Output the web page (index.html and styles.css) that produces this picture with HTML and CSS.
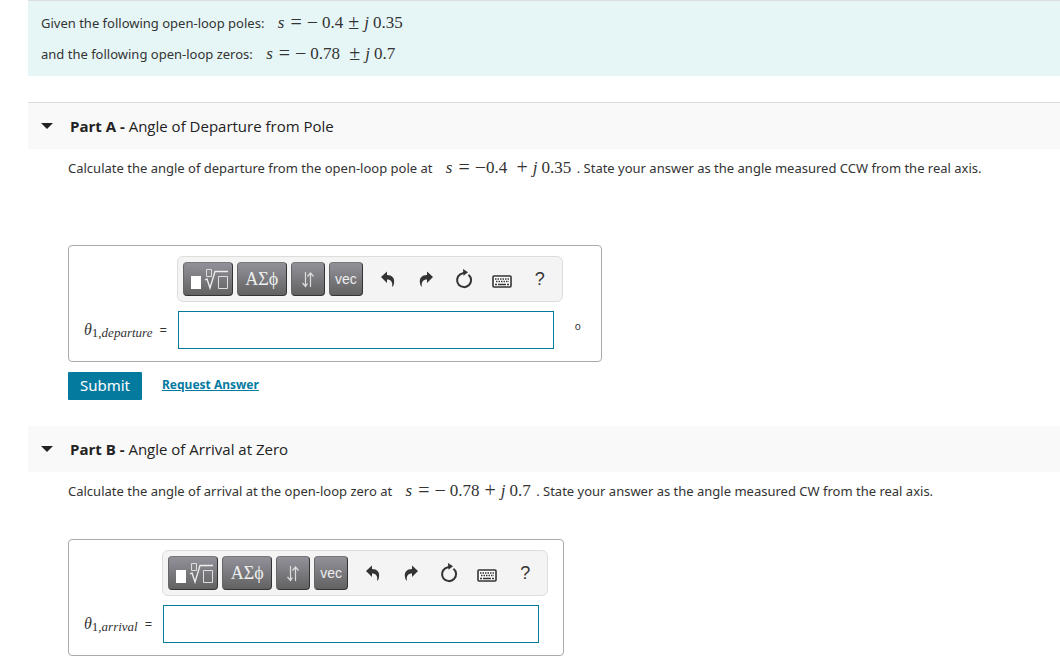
FILE: index.html
```html
<!doctype html>
<html lang="en">
<head>
  <meta charset="utf-8">
  <title>Angles of departure and arrival</title>
  <link rel="stylesheet" href="styles.css">
</head>

<body>
  <!-- icons shared by both equation toolbars -->
  <svg class="symbols" width="0" height="0" aria-hidden="true">
    <symbol id="icon-root" viewBox="-2 0 40 24">
      <path d="M1 9h10v13h-10z" fill="#fff"/>
      <path d="M16.500 2.500h5v7h-5zM28.500 9.500h9v12h-9z" fill="none" stroke="#ddd"/>
      <path d="M15 13l2-1l3 9l5-16.500h13" fill="none" stroke="#eee" stroke-width="1.300"/>
    </symbol>
    <symbol id="icon-arrows" viewBox="0 0 14 18">
      <path d="M4.500 2v14M1.500 13l3 3.500l2-3M9.500 17v-14M6.500 6.500l3-3.500l3 3.500" fill="none" stroke="#ddd" stroke-width="1.200"/>
    </symbol>
    <symbol id="icon-undo" viewBox="0 0 16 16">
      <path d="M1 6l6-5.500v3.500c5 0 8 3 7 8c0 2-1 3-2 4c1-5-1-7.500-5-7.500v3.500z" fill="#333"/>
    </symbol>
    <symbol id="icon-redo" viewBox="0 0 16 16">
      <path d="M15 6l-6-5.500v3.500c-5 0-8 3-7 8c0 2 1 3 2 4c-1-5 1-7.500 5-7.500v3.500z" fill="#333"/>
    </symbol>
    <symbol id="icon-reset" viewBox="0 0 18 20">
      <path d="M13.500 5.700a7 7 0 1 1-8.300-.4l4.800-2" fill="none" stroke="#333" stroke-width="2"/>
      <path d="M8 0l5 3.200l-4.500 3.600z" fill="#333"/>
    </symbol>
    <symbol id="icon-keyboard" viewBox="0 0 20 13">
      <rect x="1" y="1" width="18" height="11" rx="1" fill="#fff" stroke="#333" stroke-width="1.600"/>
      <path d="M3 4h14M4 6.500h13" stroke="#333" stroke-width="1.500" stroke-dasharray="1.500 1"/>
      <path d="M3 9.500h2M6 9.500h8M15 9.500h2" stroke="#333" stroke-width="1.500"/>
    </symbol>
  </svg>

  <main>
    <section class="intro">
      <p>Given the following open-loop poles: <span class="math"><i class="var">s</i><span class="rel">=</span><span class="neg">−</span>0.4<span class="bin">±</span><i class="imag">j</i>0.35</span></p>
      <p>and the following open-loop zeros: <span class="math"><i class="var">s</i><span class="rel">=</span><span class="neg">−</span>0.78 <span class="bin">±</span><i class="imag">j</i>0.7</span></p>
    </section>

    <section class="part part-a">
      <h2><button type="button" class="toggle" aria-label="Collapse Part A"></button><span><b>Part A -</b> Angle of Departure from Pole</span></h2>
      <div class="content">
        <p>Calculate the angle of departure from the open-loop pole at <span class="math"><i class="var">s</i><span class="rel">=</span><span class="sign">−</span>0.4 <span class="bin">+</span><i class="imag">j</i>0.35</span> . State your answer as the angle measured CCW from the real axis.</p>
        <div class="answer">
          <div class="toolbar">
            <button type="button" class="key wide" aria-label="Templates"><svg width="40" height="24"><use href="#icon-root"/></svg></button>
            <button type="button" class="key wide greek">ΑΣϕ</button>
            <button type="button" class="key" aria-label="Arrows"><svg width="14" height="18"><use href="#icon-arrows"/></svg></button>
            <button type="button" class="key">vec</button>
            <button type="button" class="tool" aria-label="Undo"><svg width="16" height="16"><use href="#icon-undo"/></svg></button>
            <button type="button" class="tool" aria-label="Redo"><svg width="16" height="16"><use href="#icon-redo"/></svg></button>
            <button type="button" class="tool" aria-label="Reset"><svg width="18" height="20"><use href="#icon-reset"/></svg></button>
            <button type="button" class="tool keyboard" aria-label="Keyboard shortcuts"><svg width="20" height="13"><use href="#icon-keyboard"/></svg></button>
            <button type="button" class="tool">?</button>
          </div>
          <label for="departure"><i>θ</i><sub>1,<i>departure</i></sub> <span class="equals">=</span></label>
          <input type="text" id="departure" name="departure">
          <span class="unit">o</span>
        </div>
        <div class="actions">
          <button type="button" class="submit">Submit</button>
          <a href="#answer">Request Answer</a>
        </div>
      </div>
    </section>

    <section class="part part-b">
      <h2><button type="button" class="toggle" aria-label="Collapse Part B"></button><span><b>Part B -</b> Angle of Arrival at Zero</span></h2>
      <div class="content">
        <p>Calculate the angle of arrival at the open-loop zero at <span class="math"><i class="var">s</i><span class="rel">=</span><span class="neg">−</span>0.78<span class="bin">+</span><i class="imag">j</i>0.7</span> . State your answer as the angle measured CW from the real axis.</p>
        <div class="answer">
          <div class="toolbar">
            <button type="button" class="key wide" aria-label="Templates"><svg width="40" height="24"><use href="#icon-root"/></svg></button>
            <button type="button" class="key wide greek">ΑΣϕ</button>
            <button type="button" class="key" aria-label="Arrows"><svg width="14" height="18"><use href="#icon-arrows"/></svg></button>
            <button type="button" class="key">vec</button>
            <button type="button" class="tool" aria-label="Undo"><svg width="16" height="16"><use href="#icon-undo"/></svg></button>
            <button type="button" class="tool" aria-label="Redo"><svg width="16" height="16"><use href="#icon-redo"/></svg></button>
            <button type="button" class="tool" aria-label="Reset"><svg width="18" height="20"><use href="#icon-reset"/></svg></button>
            <button type="button" class="tool keyboard" aria-label="Keyboard shortcuts"><svg width="20" height="13"><use href="#icon-keyboard"/></svg></button>
            <button type="button" class="tool">?</button>
          </div>
          <label for="arrival"><i>θ</i><sub>1,<i>arrival</i></sub> <span class="equals">=</span></label>
          <input type="text" id="arrival" name="arrival">
        </div>
      </div>
    </section>
  </main>
</body>
</html>
```
FILE: styles.css
```css
* {
  box-sizing: border-box;
}
body {
  margin: 0;
  background: #fff;
  color: #333;
  font-family: "Noto Sans", "Open Sans", sans-serif;
  font-size: 13px;
  line-height: 21px;
}
p, h2 {
  margin: 0;
}
.symbols {
  display: none;
}
main {
  margin-left: 28px;
}
.intro {
  padding: 12px 13px 11px;
  border-top: 1px solid #ddd;
  background: #e6f6f7;
}
.intro p + p {
  margin-top: 10px;
}

.math {
  margin: 0 2px 0 10px;
  font-family: "Liberation Serif", serif;
  font-size: 17px;
  line-height: 16px;
  white-space: nowrap;
}
.var {
  margin-right: 1px;
}
.rel, .neg, .sign, .bin {
  font-size: 20px;
  line-height: 0;
  vertical-align: -1px;
}
.rel, .bin {
  margin: 0 5px;
}
.neg {
  margin-right: 4px;
}
.imag {
  margin-right: 4px;
}

.part-a {
  margin-top: 26px;
  border-top: 1px solid #ddd;
}
.part-b {
  margin-top: 26px;
}
h2 {
  display: flex;
  align-items: center;
  gap: 17px;
  height: 46px;
  padding: 0 13px;
  background: #f9f9f9;
  color: #222;
  font-family: "Open Sans", "Noto Sans", sans-serif;
  font-size: 15px;
  font-weight: 400;
}
.toggle {
  width: 12px;
  height: 6px;
  padding: 0;
  border: 0;
  background: #222;
  clip-path: polygon(0 0, 100% 0, 50% 100%);
}
.content {
  padding: 9px 0 0 40px;
}

.answer {
  display: grid;
  grid-template-columns: auto auto auto;
  align-items: center;
  row-gap: 9px;
  width: fit-content;
  padding: 10px 15px 12px;
  border: 1px solid #aaa;
  border-radius: 4px;
}
.part-a .answer {
  margin-top: 66px;
}
.part-b .answer {
  margin-top: 37px;
}
.toolbar {
  grid-column: 2;
  display: flex;
  align-items: center;
  gap: 4px;
  width: 386px;
  height: 46px;
  padding: 0 5px;
  border: 1px solid #ddd;
  border-radius: 6px;
  background: #f4f4f4;
}
.key {
  display: flex;
  align-items: center;
  justify-content: center;
  width: 34px;
  height: 34px;
  padding: 0;
  border: 1px solid #333;
  border-top-color: #777;
  border-left-color: #666;
  border-radius: 4px;
  background: linear-gradient(#92919a, #626262);
  color: #eee;
  font: 14px "Liberation Sans", sans-serif;
}
.wide {
  width: 50px;
}
.greek {
  font: 18px "Liberation Serif", serif;
}
.tool {
  display: flex;
  align-items: center;
  justify-content: center;
  width: 34px;
  height: 34px;
  padding: 0;
  border: 0;
  background: none;
  color: #333;
  font: 18px "Liberation Sans", sans-serif;
}
.key + .tool {
  margin-left: 4px;
}
.keyboard {
  padding-top: 4px;
}
label {
  grid-column: 1;
  padding-right: 10px;
  font-family: "Liberation Serif", serif;
  font-size: 16px;
  white-space: nowrap;
}
sub {
  font-size: 13px;
  line-height: 0;
  vertical-align: -2px;
}
.equals {
  margin-left: 3px;
  font-family: "Noto Sans", sans-serif;
  font-size: 13px;
}
input {
  width: 376px;
  height: 38px;
  margin: 0 0 0 1px;
  padding: 0 8px;
  border: 1px solid #057a9a;
  background: #fff;
  font: 16px "Liberation Serif", serif;
}
.unit {
  width: 23px;
  padding: 0 0 8px 12px;
  font-size: 10px;
}
.actions {
  display: flex;
  align-items: center;
  gap: 20px;
  margin-top: 10px;
}
.submit {
  width: 74px;
  height: 28px;
  padding: 0 0 2px;
  border: 0;
  border-radius: 1px;
  background: #057a9f;
  color: #fff;
  font: 15px "Noto Sans", sans-serif;
}
a {
  padding-bottom: 3px;
  color: #057a9f;
  font-size: 12px;
  font-weight: 700;
}
```
